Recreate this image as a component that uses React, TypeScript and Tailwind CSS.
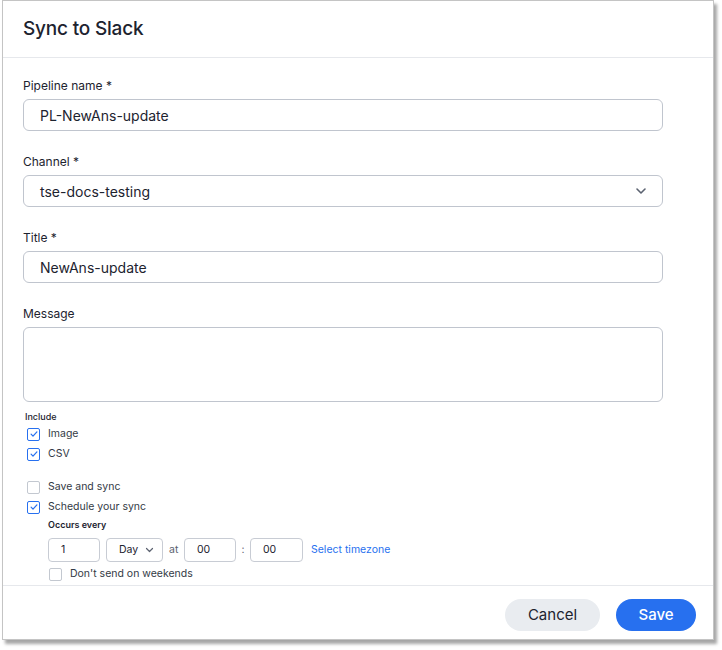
import React from 'react';

const font = { fontFamily: 'Inter, "Noto Sans", sans-serif' };

function Chevron({ className }: { className?: string }) {
  return (
    <svg viewBox="0 0 12 8" className={className} fill="none" aria-hidden>
      <path d="M2 2l4 4 4-4" stroke="currentColor" strokeWidth="1.6" strokeLinecap="round" strokeLinejoin="round" />
    </svg>
  );
}

function Check({ checked, label, small }: { checked: boolean; label: string; small?: boolean }) {
  return (
    <div className={`flex items-center ${small ? 'h-[18px]' : 'h-5'}`}>
      <span
        className={`flex h-[13px] w-[13px] shrink-0 items-center justify-center rounded-[2px] border ${
          checked ? 'border-[#2770ef] bg-white' : 'border-[#c3c8d0] bg-white'
        }`}
      >
        {checked && (
          <svg viewBox="0 0 12 12" className="h-[10px] w-[10px]" fill="none">
            <path d="M2.5 6.2l2.3 2.3 4.7-5" stroke="#2770ef" strokeWidth="1.5" strokeLinecap="round" strokeLinejoin="round" />
          </svg>
        )}
      </span>
      <span className="ml-[8px] text-[10.5px] text-[#333a45]">{label}</span>
    </div>
  );
}

function Field({ label, children }: { label: string; children: React.ReactNode }) {
  return (
    <div className="flex flex-col">
      <label className="h-5 text-[12px] leading-5 text-[#1d232f]">{label}</label>
      <div className="mt-[3px]">{children}</div>
    </div>
  );
}

export default function App() {
  return (
    <div className="min-h-[650px] bg-white pl-[2px]" style={font}>
      <div className="w-[712px] h-[640px] border border-[#c4c4c4] bg-white shadow-[3px_4px_3px_rgba(0,0,0,0.35)] flex flex-col">
        <div className="h-[57px] shrink-0 border-b border-[#e6e8ec] flex items-center pl-[20px]">
          <h2 className="text-[19px] font-medium text-[#1d232f] tracking-[-0.2px]">Sync to Slack</h2>
        </div>

        <div className="flex-1 pl-[20px] pt-[18px] flex flex-col">
          <div className="w-[640px] flex flex-col gap-[21px]">
            <Field label="Pipeline name *">
              <div className="h-8 rounded-md border border-[#c0c5ce] flex items-center px-4 text-[14px] text-[#1d232f]">
                PL-NewAns-update
              </div>
            </Field>
            <Field label="Channel *">
              <div className="h-8 rounded-md border border-[#c0c5ce] flex items-center justify-between pl-4 pr-[15px] text-[14px] text-[#1d232f]">
                <span>tse-docs-testing</span>
                <Chevron className="h-[8px] w-[12px] text-[#5b6270]" />
              </div>
            </Field>
            <Field label="Title *">
              <div className="h-8 rounded-md border border-[#c0c5ce] flex items-center px-4 text-[14px] text-[#1d232f]">
                NewAns-update
              </div>
            </Field>
            <Field label="Message">
              <div className="h-[75px] rounded-md border border-[#c0c5ce]" />
            </Field>
          </div>

          <div className="mt-[8px] flex flex-col">
            <div className="h-[14px] text-[9px] font-medium leading-[14px] text-[#1d232f] pl-[2px]">Include</div>
            <div className="pl-[4px] flex flex-col">
              <Check checked label="Image" />
              <Check checked label="CSV" />
            </div>
            <div className="pl-[4px] mt-[13px] flex flex-col">
              <Check checked={false} label="Save and sync" />
              <Check checked label="Schedule your sync" />
            </div>
            <div className="pl-[25px] flex flex-col">
              <div className="mt-px h-[14px] text-[9px] font-semibold leading-[14px] text-[#1d232f]">Occurs every</div>
              <div className="mt-[6px] flex items-center h-6 text-[10.5px] text-[#1d232f]">
                <div className="h-6 w-[52px] rounded-[4px] border border-[#c8ccd4] flex items-center pl-[12px]">1</div>
                <div className="ml-[6px] h-6 w-[57px] rounded-[4px] border border-[#c8ccd4] flex items-center pl-[12px] gap-[7px]">
                  <span>Day</span>
                  <Chevron className="h-[6px] w-[9px] text-[#5b6270]" />
                </div>
                <span className="ml-[6px] w-[15px] text-[#5b6270]">at</span>
                <div className="h-6 w-[52px] rounded-[4px] border border-[#c8ccd4] flex items-center pl-[12px]">00</div>
                <span className="w-[14px] text-center text-[#5b6270]">:</span>
                <div className="h-6 w-[53px] rounded-[4px] border border-[#c8ccd4] flex items-center pl-[12px]">00</div>
                <span className="ml-[8px] text-[#2770ef]">Select timezone</span>
              </div>
              <div className="mt-[3px] pl-[1px]">
                <Check small checked={false} label="Don't send on weekends" />
              </div>
            </div>
          </div>
        </div>

        <div className="h-[54px] shrink-0 border-t border-[#e6e8ec] flex justify-end items-start pt-[13px] pr-[17px] gap-4">
          <button className="h-8 w-[95px] rounded-full bg-[#e9ecf0] text-[15px] text-[#1d232f]">Cancel</button>
          <button className="h-8 w-[80px] rounded-full bg-[#2770ef] text-[15px] font-medium text-white">Save</button>
        </div>
      </div>
    </div>
  );
}
